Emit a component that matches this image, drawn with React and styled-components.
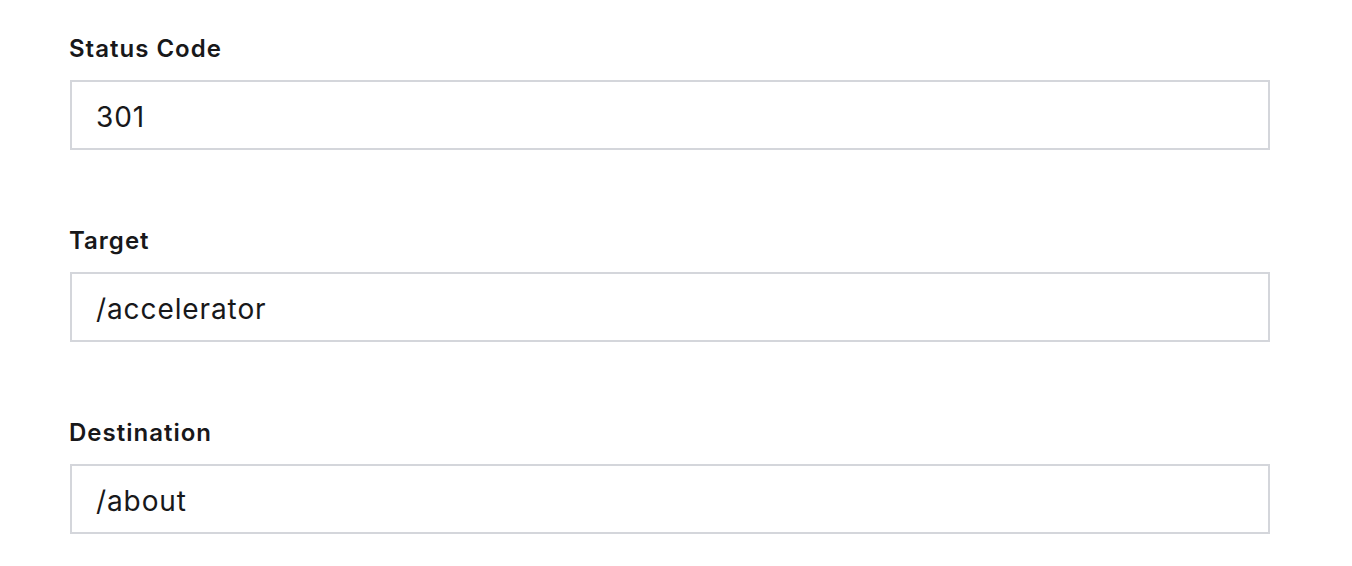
import styled, { createGlobalStyle } from "styled-components";

const GlobalStyle = createGlobalStyle`
    body {
        margin: 0;
        background: #ffffff;
        font-family: Inter, "Noto Sans", sans-serif;
    }
`;

const fields = [
    { name: "status", label: "Status Code", value: "301" },
    { name: "target", label: "Target", value: "/accelerator" },
    { name: "destination", label: "Destination", value: "/about" },
];

const App = () => {
    return (
        <>
            <GlobalStyle />
            <Form>
                {fields.map((field) => (
                    <Field key={field.name}>
                        <Label htmlFor={field.name}>{field.label}</Label>
                        <Input id={field.name} type="text" defaultValue={field.value} />
                    </Field>
                ))}
            </Form>
        </>
    );
};

const Form = styled.form`
    display: flex;
    flex-direction: column;
    gap: 74px;
    padding: 32px 0 0 69px;
    width: 1201px;
`;
const Field = styled.div`
    display: flex;
    flex-direction: column;
    gap: 16px;
`;
const Label = styled.label`
    height: 32px;
    line-height: 33px;
    font-size: 24px;
    font-weight: 600;
    letter-spacing: 1px;
    color: #18181a;
`;
const Input = styled.input`
    box-sizing: border-box;
    width: 1200px;
    height: 70px;
    margin-left: 1px;
    padding: 3px 24px 0;
    border: 2px solid #d4d6db;
    border-radius: 0;
    outline: none;
    font-family: Inter, "Noto Sans", sans-serif;
    font-size: 28px;
    letter-spacing: 0.9px;
    color: #18181a;
    background: #ffffff;
`;

export default App;
